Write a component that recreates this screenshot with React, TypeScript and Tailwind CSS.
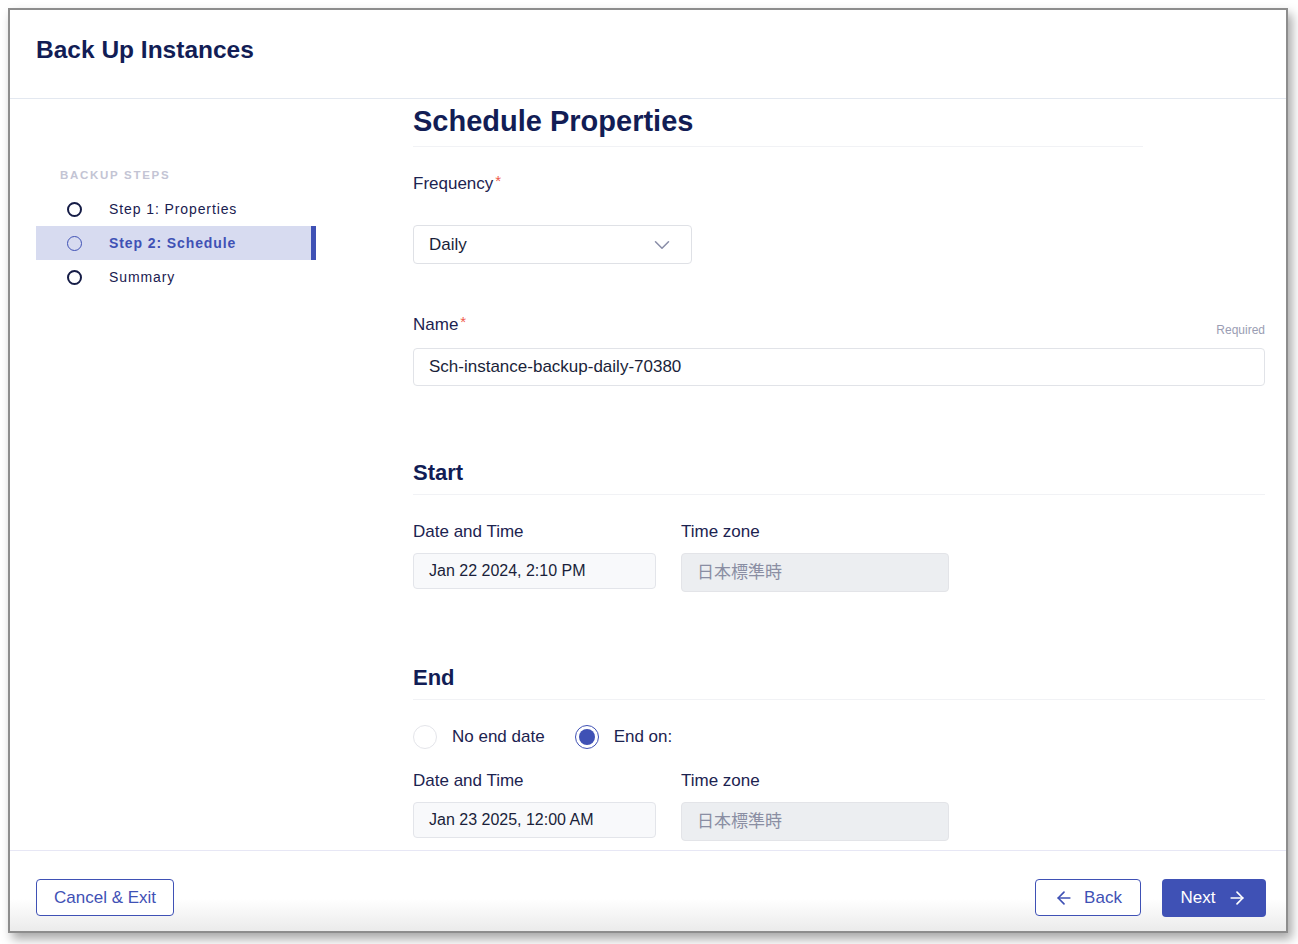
import React, { useState } from 'react';
import { ArrowLeft, ArrowRight, ChevronDown } from 'lucide-react';

const steps = [
  { id: 1, label: 'Step 1: Properties' },
  { id: 2, label: 'Step 2: Schedule' },
  { id: 3, label: 'Summary' },
];

function DateRow({ value }: { value: string }) {
  return (
    <div className="flex gap-[25px]">
      <div className="w-[243px]">
        <div className="text-[17px] leading-[24px] text-[#1c2350]">Date and Time</div>
        <div className="mt-[9px] h-[36px] rounded-[4px] border border-[#e3e5ea] bg-[#f8f9fb] pl-[15px] flex items-center text-[16px] text-[#1a1f3a]">
          {value}
        </div>
      </div>
      <div className="w-[268px]">
        <div className="text-[17px] leading-[24px] text-[#1c2350]">Time zone</div>
        <div
          className="mt-[9px] h-[39px] rounded-[4px] border border-[#e3e4e8] bg-[#eceef1] pl-[15px] flex items-center text-[17px] text-[#8a8ea3]"
          style={{ fontFamily: '"Liberation Sans", "Noto Sans CJK JP", sans-serif' }}
        >
          日本標準時
        </div>
      </div>
    </div>
  );
}

export default function App() {
  const [active] = useState(2);
  const [endOn, setEndOn] = useState(true);

  return (
    <div className="min-h-screen bg-white p-[8px]" style={{ fontFamily: '"Liberation Sans", Arial, sans-serif' }}>
      <div className="w-[1280px] h-[925px] border-2 border-[#8d8d8d] bg-white flex flex-col shadow-[4px_6px_10px_rgba(0,0,0,0.35)]">
        {/* Header */}
        <div className="h-[89px] shrink-0 border-b border-[#e3e8f0] pl-[26px] pt-[24px]">
          <h1 className="text-[24.5px] leading-[32px] font-bold text-[#121d55]">Back Up Instances</h1>
        </div>

        {/* Body */}
        <div className="flex-1 flex overflow-hidden">
          {/* Steps */}
          <div className="w-[403px] shrink-0 pl-[26px] pt-[68px]">
            <div className="pl-[24px] text-[11.5px] leading-[16px] font-bold tracking-[1.7px] text-[#c3c4d4]">BACKUP STEPS</div>
            <div className="mt-[9px] w-[280px]">
              {steps.map((s) => {
                const isActive = s.id === active;
                return (
                  <div
                    key={s.id}
                    className={`h-[34px] flex items-center pl-[31px] ${isActive ? 'bg-[#d7dbf0] border-r-[5px] border-[#3f51b5]' : ''}`}
                  >
                    <span
                      className={`w-[15px] h-[15px] rounded-full ${isActive ? 'border-[1.5px] border-[#3f51b5]' : 'border-2 border-[#151c46]'}`}
                    />
                    <span
                      className={`ml-[27px] text-[14px] tracking-[0.9px] ${isActive ? 'font-bold text-[#3f51b5]' : 'text-[#1a2050]'}`}
                    >
                      {s.label}
                    </span>
                  </div>
                );
              })}
            </div>
          </div>

          {/* Form */}
          <div className="w-[852px] pt-[2px]">
            <h2 className="w-[730px] text-[29px] leading-[40px] font-bold text-[#121d55] pb-[5px] border-b border-[#f1f2f5]">
              Schedule Properties
            </h2>

            <div className="mt-[25px] text-[17px] leading-[24px] text-[#1c2350]">
              Frequency<span className="text-[#ef5a4c] text-[15px] align-top ml-[2px] leading-[18px]">*</span>
            </div>
            <div className="mt-[29px] w-[279px] h-[39px] rounded-[4px] border border-[#dfe1e6] flex items-center justify-between pl-[15px] pr-[16px] text-[17px] text-[#1a1f3a]">
              Daily
              <ChevronDown className="w-[26px] h-[26px] text-[#8a8ea8]" strokeWidth={1.4} />
            </div>

            <div className="mt-[49px] flex items-end justify-between">
              <div className="text-[17px] leading-[24px] text-[#1c2350]">
                Name<span className="text-[#ef5a4c] text-[15px] align-top ml-[2px] leading-[18px]">*</span>
              </div>
              <div className="text-[12px] leading-[16px] text-[#9a9db3] mb-[-1px]">Required</div>
            </div>
            <div className="mt-[11px] h-[38px] rounded-[4px] border border-[#e1e3e8] flex items-center pl-[15px] text-[17px] text-[#1a1f3a]">
              Sch-instance-backup-daily-70380
            </div>

            <h3 className="mt-[73px] text-[22px] leading-[28px] font-bold text-[#121d55] pb-[7px] border-b border-[#f1f2f5]">Start</h3>
            <div className="mt-[25px]">
              <DateRow value="Jan 22 2024, 2:10 PM" />
            </div>

            <h3 className="mt-[72px] text-[22px] leading-[28px] font-bold text-[#121d55] pb-[7px] border-b border-[#f1f2f5]">End</h3>
            <div className="mt-[25px] flex items-center h-[24px]">
              <button onClick={() => setEndOn(false)} className="flex items-center">
                <span className={`w-[24px] h-[24px] rounded-full border flex items-center justify-center ${!endOn ? 'border-[#3f51b5]' : 'border-[#e4e5ea]'}`}>
                  {!endOn && <span className="w-[16px] h-[16px] rounded-full bg-[#3f51b5]" />}
                </span>
                <span className="ml-[15px] text-[17px] text-[#1c2350]">No end date</span>
              </button>
              <button onClick={() => setEndOn(true)} className="flex items-center ml-[30px]">
                <span className={`w-[24px] h-[24px] rounded-full border flex items-center justify-center ${endOn ? 'border-[#3f51b5]' : 'border-[#e4e5ea]'}`}>
                  {endOn && <span className="w-[16px] h-[16px] rounded-full bg-[#3f51b5]" />}
                </span>
                <span className="ml-[15px] text-[17px] text-[#1c2350]">End on:</span>
              </button>
            </div>
            <div className="mt-[20px]">
              <DateRow value="Jan 23 2025, 12:00 AM" />
            </div>
          </div>
        </div>

        {/* Footer */}
        <div className="h-[81px] shrink-0 border-t border-[#e7e7f5] bg-gradient-to-b from-white from-60% to-[#ebebeb] flex items-start justify-between pl-[26px] pr-[20px] pt-[28px]">
          <button className="h-[37px] px-[17px] rounded-[4px] border border-[#3f51b5] text-[17px] text-[#3f51b5] bg-white">
            Cancel &amp; Exit
          </button>
          <div className="flex gap-[21px]">
            <button className="h-[37px] w-[106px] rounded-[4px] border border-[#3f51b5] text-[17px] text-[#3f51b5] bg-white flex items-center justify-center gap-[10px]">
              <ArrowLeft className="w-[20px] h-[20px]" strokeWidth={2} />
              Back
            </button>
            <button className="h-[38px] w-[104px] rounded-[4px] bg-[#3f51b5] text-[17px] text-white flex items-center justify-center gap-[12px]">
              Next
              <ArrowRight className="w-[20px] h-[20px]" strokeWidth={2} />
            </button>
          </div>
        </div>
      </div>
    </div>
  );
}
